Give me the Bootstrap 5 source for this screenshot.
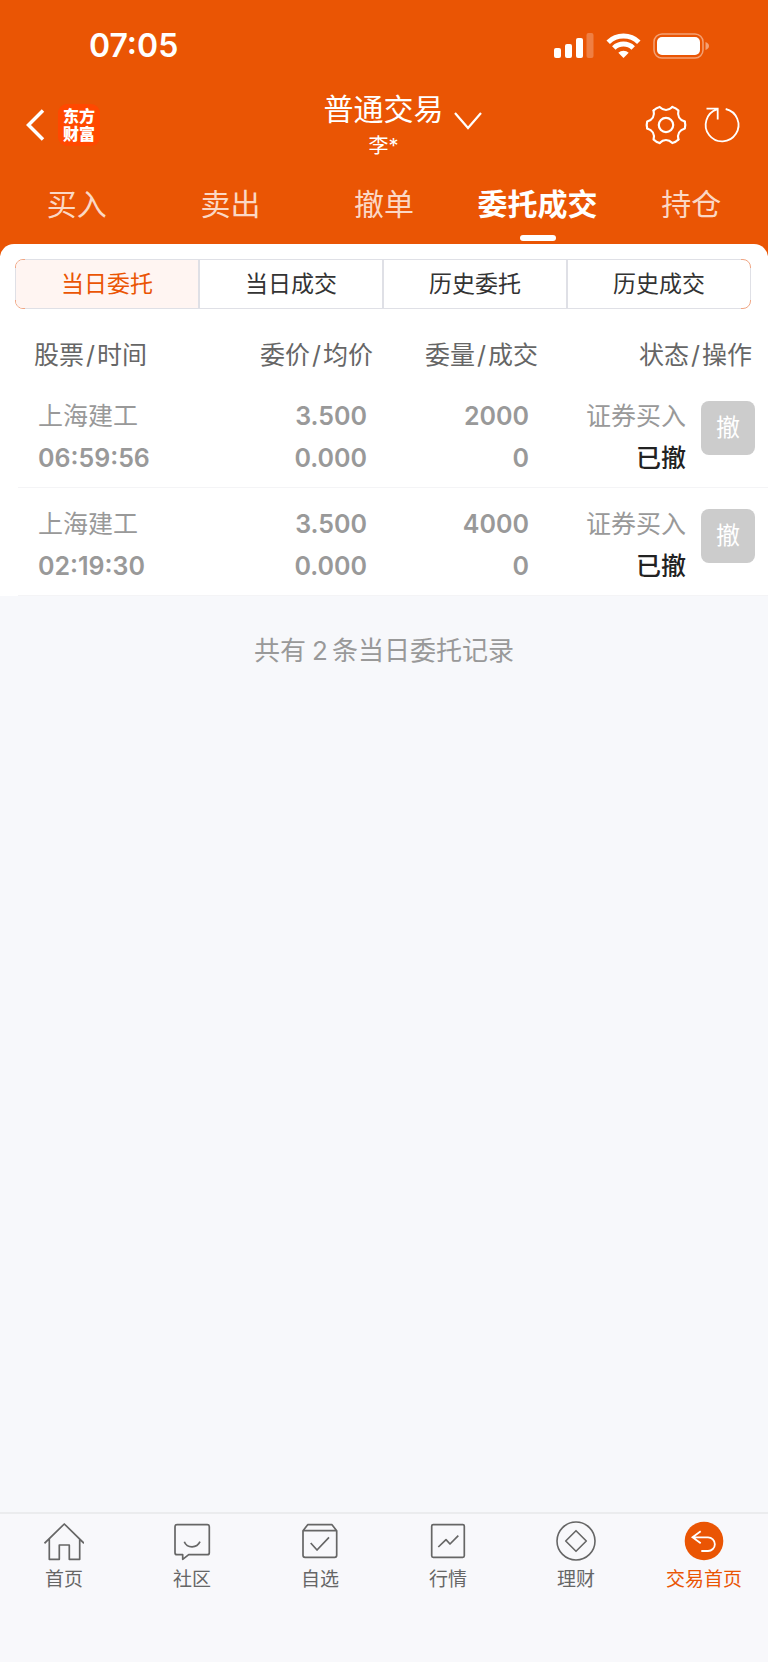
<!DOCTYPE html>
<html lang="zh-CN">
<head>
<meta charset="utf-8">
<meta name="viewport" content="width=device-width, initial-scale=1">
<title>普通交易 - 委托成交</title>
<link href="https://cdn.jsdelivr.net/npm/bootstrap@5.3.0/dist/css/bootstrap.min.css" rel="stylesheet">
<style>
  :root { --brand: #ea5504; --page: #f7f8fb; --line: #dfe0e6; }
  body { font-family: Inter, "Noto Sans CJK SC", sans-serif; background: var(--page); color: #333; }
  svg { display: block; flex: none; fill: none; stroke: currentColor; }
  button { font-family: inherit; }
  .plain-btn { background: none; border: 0; padding: 0; color: inherit; }

  .app-head { background: var(--brand); color: #fff; padding-bottom: 12px; margin-bottom: -12px; }
  .status-bar { height: 88px; padding: 4px 57px 0 89px; }
  .clock { font-size: 32px; font-weight: 600; line-height: 40px; }

  .title-bar { display: grid; grid-template-columns: 1fr auto 1fr; height: 72px; padding: 0 25px 0 24px; align-items: center; }
  .brand-logo { width: 42px; height: 42px; border-radius: 9px; background: #ff4800; font-size: 16px; font-weight: 900; line-height: 18px; padding-top: 3px; text-align: center; }
  .account-pick { display: grid; grid-template-columns: 38px auto 38px; align-items: center; }
  .account-name { font-size: 30px; line-height: 42px; }
  .account-user { font-size: 20px; line-height: 32px; }
  .tool-icons { gap: 14px; }

  .trade-tabs a { flex: 1 1 0; display: flex; flex-direction: column; align-items: center; color: #fbd8c5; font-size: 30px; line-height: 44px; text-decoration: none; padding-top: 22px; height: 84px; white-space: nowrap; }
  .trade-tabs a.current { color: #fff; font-weight: 600; }
  .trade-tabs a.current::after { content: ""; width: 36px; height: 6px; border-radius: 3px; background: #fff; margin-top: 9px; }

  .sheet { background: #fff; border-radius: 14px 14px 0 0; padding-top: 15px; position: relative; }
  .segments { margin: 0 17px 0 15px; height: 50px; border: 1px solid #f0a684; border-radius: 8px; position: relative; }
  .segments::after { content: ""; position: absolute; inset: -1px; pointer-events: none;
    background:
      linear-gradient(var(--line), var(--line)) center top / calc(100% - 20px) 1px no-repeat,
      linear-gradient(var(--line), var(--line)) center bottom / calc(100% - 20px) 1px no-repeat,
      linear-gradient(var(--line), var(--line)) left center / 1px calc(100% - 18px) no-repeat,
      linear-gradient(var(--line), var(--line)) right center / 1px calc(100% - 18px) no-repeat; }
  .segments button { flex: 1 1 0; font-size: 23px; line-height: 46px; }
  .segments button + button { border-left: 2px solid var(--line); }
  .segments button.current { background: #fff5f2; color: var(--brand); border-radius: 7px 0 0 7px; }

  .orders { margin-left: 18px; width: calc(100% - 18px); table-layout: fixed; font-size: 25px; line-height: 42px; color: #999; }
  .orders th { font-weight: 400; color: #666; padding: 25px 0 4px; line-height: 42px; }
  .orders th i { font-style: normal; margin: 0 2px; }
  .orders td { padding: 15px 0 8px; vertical-align: top; font-weight: 600; border-bottom: 1px solid #f4f4f6; }
  .orders td > div { height: 42px; white-space: nowrap; }
  .orders .cjk { font-weight: 400; }
  .c-price { width: 20%; } .c-qty { width: 22%; } .c-state { width: 148px; } .c-act { width: 82px; }
  .orders td.name-cell { padding-left: 20px; }
  .orders th.name-cell { padding-left: 16px; }
  .orders td.price-cell { padding-right: 6px; }
  .orders td.qty-cell { padding-right: 9px; }
  .orders th.state-cell { padding-right: 16px; }
  .orders td.act-cell { padding: 21px 0 0 15px; }
  .orders .state-text { color: #222; font-weight: 500; }
  .cancel-btn { width: 54px; height: 54px; border-radius: 8px; background: #ccc; color: #fff; font-size: 24px; line-height: 54px; display: block; }

  .summary { font-size: 26px; line-height: 40px; color: #999; padding-top: 35px; }
  .summary span { margin: 0 4px 0 6px; }

  .dock { background: #f8f8fb; border-top: 2px solid #ebecee; padding: 7px 0 68px; }
  .dock a { flex: 1 1 0; color: #666; font-size: 19px; line-height: 28px; text-decoration: none; display: flex; flex-direction: column; align-items: center; gap: 5px; }
  .dock a.current { color: var(--brand); }
</style>
</head>
<body>
<div class="d-flex flex-column min-vh-100">

  <header class="app-head">
    <div class="status-bar d-flex align-items-center justify-content-between">
      <div class="clock">07:05</div>
      <div class="d-flex align-items-center">
        <svg width="40" height="26" viewBox="0 0 40 26" stroke="none" aria-hidden="true">
          <g fill="#fff" stroke="none">
            <rect x="0" y="15" width="7" height="10" rx="2"/>
            <rect x="11" y="11" width="7" height="14" rx="2"/>
            <rect x="22" y="5" width="7" height="20" rx="2"/>
            <rect x="32.500" y="0" width="7" height="25" rx="2" opacity=".25"/>
          </g>
        </svg>
        <svg class="ms-2 me-2 px-1" width="43" height="26" viewBox="0 0 35 26" aria-hidden="true">
          <path d="M2.200 9.200A22 22 0 0 1 32.800 9.200M7.800 15A14 14 0 0 1 27.200 15" stroke-width="5"/>
          <path d="M17.500 25L12.300 19.800A7.400 7.400 0 0 1 22.700 19.800Z" fill="#fff" stroke="none"/>
        </svg>
        <svg width="58" height="26" viewBox="0 0 58 26" aria-hidden="true">
          <rect x="1" y="1" width="49" height="24" rx="8" stroke-width="1.500" opacity=".45"/>
          <rect x="4" y="4" width="43" height="18" rx="5" fill="#fff" stroke="none"/>
          <path d="M52.500 9V17Q56 15.500 56 13T52.500 9Z" fill="#fff" stroke="none" opacity=".45"/>
        </svg>
      </div>
    </div>

    <div class="title-bar">
      <div class="d-flex align-items-center">
        <button class="plain-btn" type="button" aria-label="返回">
          <svg width="34" height="36" viewBox="0 0 34 36" stroke-width="3.500"><path d="M19 3.500L4.500 18L19 32.500"/></svg>
        </button>
        <div class="brand-logo">东方<br>财富</div>
      </div>
      <button class="plain-btn account-pick" type="button">
        <span></span>
        <span>
          <span class="account-name d-block">普通交易</span>
          <span class="account-user d-block">李*</span>
        </span>
        <svg width="28" height="20" viewBox="0 0 28 20" stroke-width="2.200" class="ms-auto mb-2"><path d="M1 2L14 17L27 2"/></svg>
      </button>
      <div class="tool-icons d-flex align-items-center justify-content-end">
        <button class="plain-btn" type="button" aria-label="设置">
          <svg width="42" height="42" viewBox="-21 -21 42 42" stroke-width="2.200" stroke-linecap="round" stroke-linejoin="round">
            <defs><path id="tooth" d="M18.800 -3.500Q19.800 0 18.800 3.500C13.600 5 11.100 9.300 12.430 14.530"/></defs>
            <use href="#tooth"/><use href="#tooth" transform="rotate(60)"/><use href="#tooth" transform="rotate(120)"/>
            <use href="#tooth" transform="rotate(180)"/><use href="#tooth" transform="rotate(240)"/><use href="#tooth" transform="rotate(300)"/>
            <circle r="7.200"/>
          </svg>
        </button>
        <button class="plain-btn" type="button" aria-label="刷新">
          <svg width="42" height="42" viewBox="-21 -21 42 42" stroke-width="1.800"><path d="M3.700 -16A16.400 16.400 0 1 1 -5 -15.600M-15.500 -16.300H-4.300V-5.500"/></svg>
        </button>
      </div>
    </div>

    <nav class="trade-tabs d-flex">
      <a href="#">买入</a>
      <a href="#">卖出</a>
      <a href="#">撤单</a>
      <a href="#" class="current" aria-current="page">委托成交</a>
      <a href="#">持仓</a>
    </nav>
  </header>

  <main class="flex-grow-1">
    <section class="sheet">
      <div class="segments d-flex">
        <button type="button" class="plain-btn current">当日委托</button>
        <button type="button" class="plain-btn">当日成交</button>
        <button type="button" class="plain-btn">历史委托</button>
        <button type="button" class="plain-btn">历史成交</button>
      </div>

      <table class="orders">
        <colgroup><col><col class="c-price"><col class="c-qty"><col class="c-state"><col class="c-act"></colgroup>
        <thead>
          <tr>
            <th scope="col" class="name-cell">股票<i>/</i>时间</th>
            <th scope="col" class="text-end">委价<i>/</i>均价</th>
            <th scope="col" class="text-end">委量<i>/</i>成交</th>
            <th scope="col" colspan="2" class="text-end state-cell">状态<i>/</i>操作</th>
          </tr>
        </thead>
        <tbody>
          <tr>
            <td class="name-cell"><div class="cjk">上海建工</div><div>06:59:56</div></td>
            <td class="price-cell text-end"><div>3.500</div><div>0.000</div></td>
            <td class="qty-cell text-end"><div>2000</div><div>0</div></td>
            <td class="text-end"><div class="cjk">证券买入</div><div class="state-text">已撤</div></td>
            <td class="act-cell"><button type="button" class="plain-btn cancel-btn">撤</button></td>
          </tr>
          <tr>
            <td class="name-cell"><div class="cjk">上海建工</div><div>02:19:30</div></td>
            <td class="price-cell text-end"><div>3.500</div><div>0.000</div></td>
            <td class="qty-cell text-end"><div>4000</div><div>0</div></td>
            <td class="text-end"><div class="cjk">证券买入</div><div class="state-text">已撤</div></td>
            <td class="act-cell"><button type="button" class="plain-btn cancel-btn">撤</button></td>
          </tr>
        </tbody>
      </table>
    </section>
    <p class="summary text-center mb-0">共有<span>2</span>条当日委托记录</p>
  </main>

  <nav class="dock d-flex">
    <a href="#">
      <svg width="40" height="40" viewBox="0 0 40 40" stroke-width="1.700"><path d="M.5 22.300L20.300 3L40 22.300M5.300 18V38.300H15.300V24H25.300V38.300H35.700V18" stroke-linejoin="round"/></svg>
      首页
    </a>
    <a href="#">
      <svg width="40" height="40" viewBox="0 0 40 40" stroke-width="1.700" stroke-linejoin="round"><path d="M5 3.700H35.300Q37.300 3.700 37.300 5.700V31.700Q37.300 33.700 35.300 33.700H16.700L10.700 38.300V33.700H5Q3 33.700 3 31.700V5.700Q3 3.700 5 3.700ZM12.300 20.700C15 27.500 25 27.500 28 20.700"/></svg>
      社区
    </a>
    <a href="#">
      <svg width="40" height="40" viewBox="0 0 40 40" stroke-width="1.700" stroke-linejoin="round"><path d="M3 9.700L7.700 3.700H32L36.700 9.700V34.300Q36.700 36.300 34.700 36.300H5Q3 36.300 3 34.300ZM3 9.700H36.700M10.700 22L17 29L29 16.300"/></svg>
      自选
    </a>
    <a href="#">
      <svg width="40" height="40" viewBox="0 0 40 40" stroke-width="1.700" stroke-linejoin="round"><rect x="3.700" y="3.700" width="32.600" height="32.600" rx="1.500"/><path d="M10.300 26L18 18.700L22 23L30.300 14.700"/></svg>
      行情
    </a>
    <a href="#">
      <svg width="40" height="40" viewBox="0 0 40 40" stroke-width="1.600" stroke-linejoin="round"><circle cx="20" cy="20" r="19"/><path d="M20 9.700L30.300 20L20 30.300L9.700 20Z"/></svg>
      理财
    </a>
    <a href="#" class="current" aria-current="page">
      <svg width="40" height="40" viewBox="0 0 40 40"><circle cx="20" cy="20" r="19.300" fill="#ea5504" stroke="none"/><path d="M16.700 10.300L8.500 16.300L16.700 22.300M8.500 16.300H24A6.800 6.800 0 0 1 24 30H17.300" stroke="#fff" stroke-width="1.800"/></svg>
      交易首页
    </a>
  </nav>
</div>
<script src="https://cdn.jsdelivr.net/npm/bootstrap@5.3.0/dist/js/bootstrap.bundle.min.js"></script>
</body>
</html>
